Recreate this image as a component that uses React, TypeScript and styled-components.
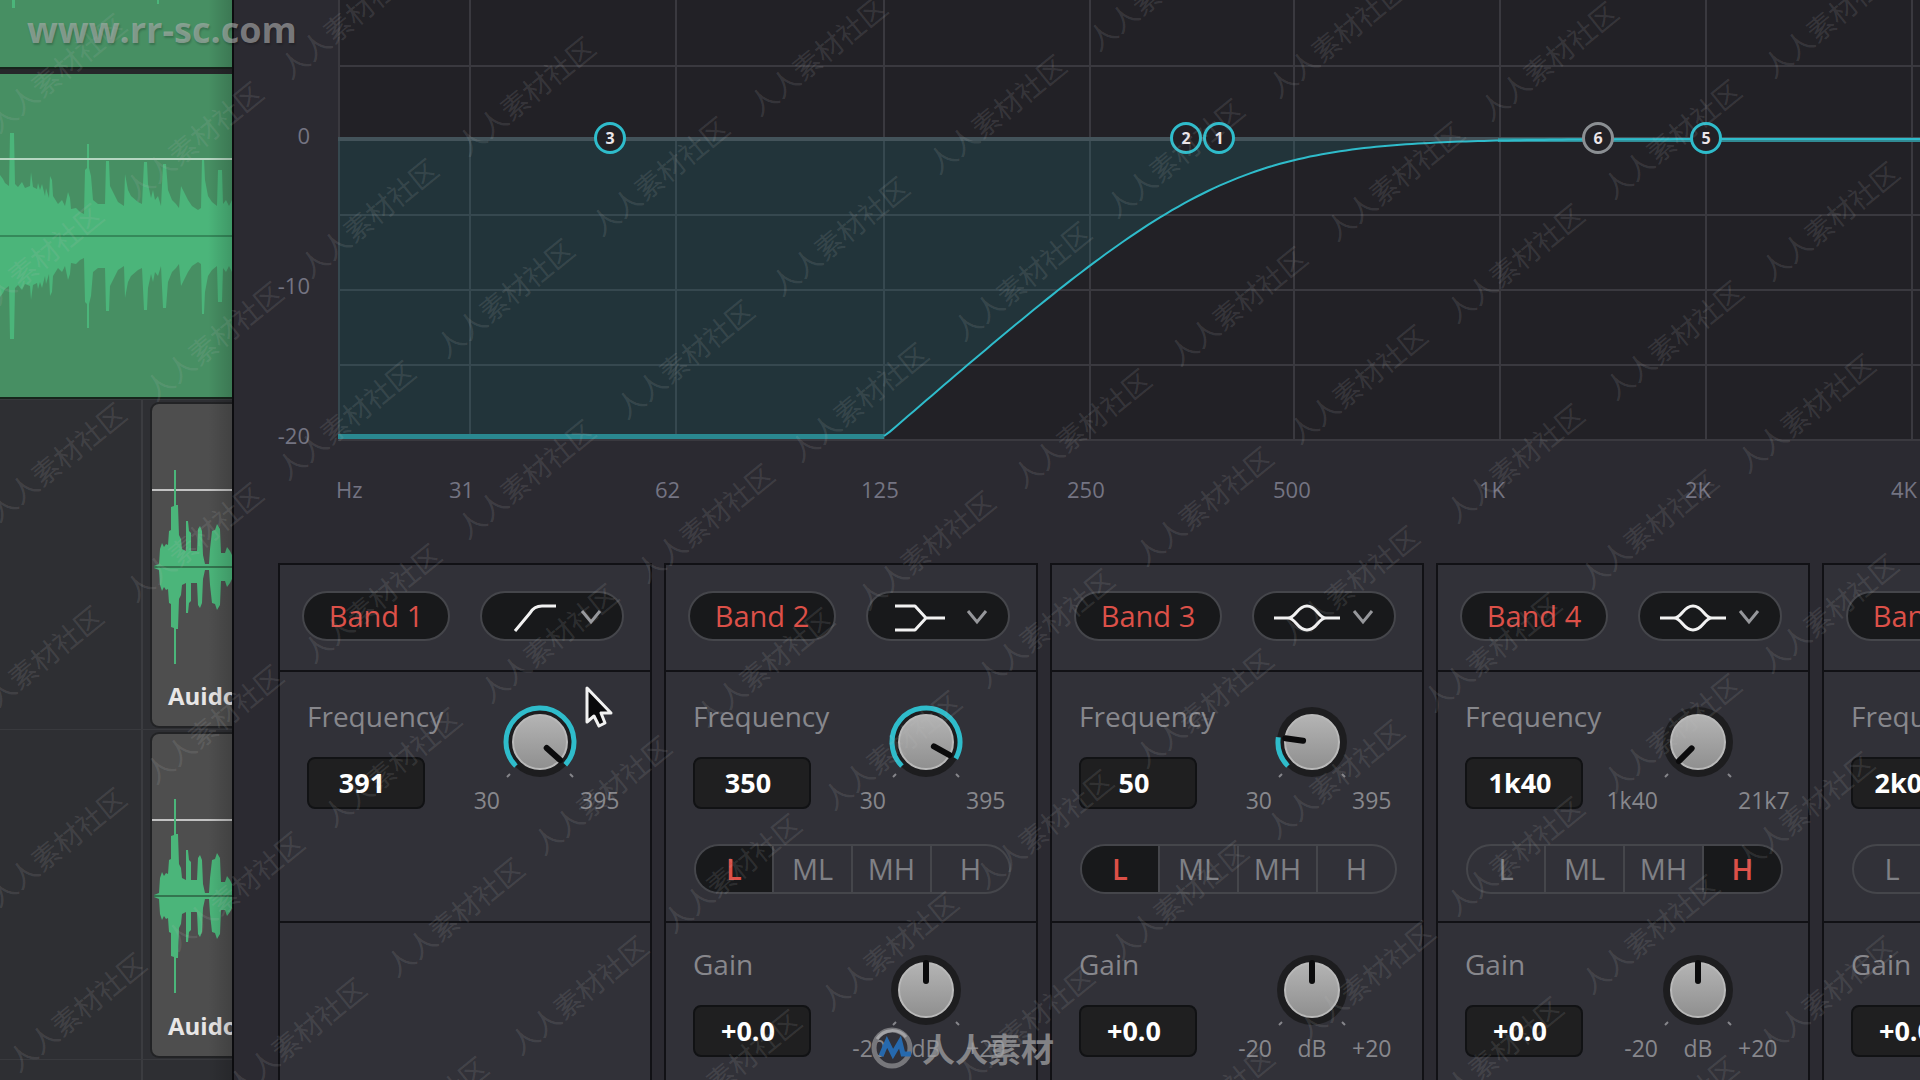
import React, { useState } from "react";
import styled, { createGlobalStyle } from "styled-components";

const Global = createGlobalStyle`
  *, *::before, *::after { box-sizing: border-box; }
  html, body { margin: 0; background: #2b2a31; }
  body { font-family: "Open Sans", "Noto Sans", sans-serif; overflow: hidden; }
  button, input, select { font: inherit; color: inherit; margin: 0; }
`;

const TEAL = "#2fbccb";
const RED = "#dc5048";

const Page = styled.div`
  position: relative;
  display: flex;
  height: 100vh;
  overflow: hidden;
`;

/* ---------- Timeline ---------- */

const Timeline = styled.aside`
  flex: 0 0 232px;
  display: flex;
  flex-direction: column;
  overflow: hidden;
  background: #2e2f33;
`;

const MusicClip = styled.div<{ $height: number }>`
  flex: none;
  height: ${(p) => p.$height}px;
  background: #478f63;
  border-bottom: 2px solid #17251c;
`;

const ClipGap = styled.div`
  flex: none;
  height: 5px;
  background: #26272a;
`;

const Lane = styled.div`
  flex: none;
  display: flex;
  height: 330px;
  padding: 4px 0 3px;
  border-top: 1px solid #393a3e;
`;

const LaneHead = styled.div`
  flex: 0 0 143px;
  margin: -4px 9px -3px 0;
  border-right: 2px solid #3b3c40;
`;

const VoiceClip = styled.div`
  position: relative;
  flex: 1;
  background: #4e4e4e;
  border-radius: 7px 0 0 7px;
  box-shadow: 0 0 0 2px #222325;
  overflow: hidden;
`;

const ClipName = styled.span`
  position: absolute;
  left: 16px;
  bottom: 12px;
  color: #e8e6e6;
  font-size: 24px;
  font-weight: 700;
  line-height: 36px;
`;

const Drawing = styled.svg`
  display: block;
`;

type Point = [number, number];

const MUSIC: Point[] = [
  [0, 61], [3, 57], [5, 53], [9, 50], [10, 103], [14, 103], [15, 52], [18, 49], [22, 54], [25, 48], [30, 50],
  [31, 64], [33, 49], [37, 47], [38, 53], [40, 46], [42, 52], [45, 40], [46, 48], [49, 38], [50, 60], [52, 56], [53, 40], [58, 32],
  [62, 36], [65, 30], [68, 44], [70, 38], [71, 27], [76, 28], [80, 24], [84, 22], [85, 66], [87, 68], [87, 92],
  [89, 92], [89, 68], [91, 60], [93, 36], [98, 32], [105, 32], [106, 75], [109, 75], [110, 50], [114, 42], [118, 34],
  [124, 30], [125, 62], [128, 46], [131, 40], [138, 34], [142, 32], [144, 74], [147, 74], [148, 52], [151, 38], [153, 46],
  [155, 36], [158, 40], [161, 30], [163, 72], [166, 72], [168, 46], [172, 36], [176, 32], [179, 28], [181, 50], [184, 44], [188, 36],
  [192, 30], [198, 26], [201, 28], [202, 78], [204, 78], [205, 56], [208, 40], [212, 34], [217, 30], [218, 66],
  [222, 66], [223, 32], [226, 36], [229, 30], [232, 36],
];

const VOICE: Point[] = [
  [2, 1], [7, 3], [8, 18], [10, 24], [12, 20], [14, 23], [16, 22], [17, 36], [19, 37], [19, 60], [22, 61], [22, 97],
  [24, 97], [24, 62], [26, 62], [27, 32], [29, 28], [30, 18], [34, 16], [34, 46], [36, 46], [37, 36], [39, 34],
  [39, 16], [45, 16], [46, 38], [48, 41], [50, 36], [51, 12], [53, 3], [57, 3], [58, 18], [60, 36], [63, 37],
  [65, 43], [68, 38], [69, 14], [73, 14], [75, 20], [78, 16], [80, 12],
];

const mirror = (points: Point[], mid: number) =>
  [...points.map(([x, h]) => `${x},${mid - h}`), ...[...points].reverse().map(([x, h]) => `${x},${mid + h}`)].join(" ");

function Voice({ name, level, mid }: { name: string; level: number; mid: number }) {
  return (
    <Lane>
      <LaneHead />
      <VoiceClip>
        <Drawing width="80" height="323" aria-hidden="true">
          <rect y={level} width="80" height="2" fill="#c2c2c2" />
          <polygon points={mirror(VOICE, mid)} fill="#4bb57a" />
          <rect x="2" y={mid - 1} width="78" height="2" fill="#33754f" />
        </Drawing>
        <ClipName>{name}</ClipName>
      </VoiceClip>
    </Lane>
  );
}

/* ---------- Equalizer ---------- */

const Equalizer = styled.main`
  position: relative;
  flex: 1;
  min-width: 0;
  overflow: hidden;
  background: #2b2a31;
  border-left: 2px solid #0c0c0f;
`;

const Shade = styled.div`
  position: absolute;
  z-index: 1;
  top: 0;
  left: 208px;
  width: 24px;
  height: 100%;
  background: linear-gradient(90deg, transparent, rgba(0, 0, 0, 0.16));
  pointer-events: none;
`;

const ChartRow = styled.div`
  display: flex;
  align-items: flex-start;
`;

const LevelAxis = styled.div`
  flex: 0 0 104px;
  display: flex;
  flex-direction: column;
  gap: 120px;
  padding: 120px 28px 0 0;
  color: #747482;
  font-size: 22px;
  font-weight: 500;
  line-height: 30px;
  text-align: right;
`;

const Plot = styled.div`
  position: relative;
  flex: 1;
  min-width: 0;
  overflow: hidden;
`;

const Marker = styled.button<{ $x: number; $muted?: boolean }>`
  position: absolute;
  left: ${(p) => p.$x}px;
  top: 138px;
  width: 32px;
  height: 32px;
  padding: 0;
  transform: translate(-50%, -50%);
  border: 3px solid ${(p) => (p.$muted ? "#8b8f93" : TEAL)};
  border-radius: 50%;
  background: #222126;
  color: #ece6ea;
  font-size: 16px;
  font-weight: 700;
  line-height: 26px;
  text-align: center;
`;

const FrequencyAxis = styled.div`
  display: grid;
  grid-template-columns: 113px repeat(8, 206px);
  padding: 24px 0 59px 102px;
  color: #747482;
  font-size: 22px;
  font-weight: 500;
  line-height: 30px;
`;

const CURVE_START = 546;
const curve: string[] = [];
for (let x = CURVE_START; x <= 1700; x += 6) {
  const hz = 125 * Math.pow(2, (x - CURVE_START) / 206);
  const db = 10 * Math.log10(1 + Math.pow(391 / hz, 4));
  curve.push(`${x} ${Math.min(436, 139 + 15 * db).toFixed(1)}`);
}
const curvePath = `M${CURVE_START} 436 L${curve.join(" L")}`;

function Response() {
  return (
    <Drawing width="1700" height="441" role="img" aria-label="Frequency response">
      <rect width="1700" height="440" fill="#222126" />
      <g fill="#3a393f">
        {[0, 131, 337, 545, 751, 955, 1161, 1367, 1573].map((x) => (
          <rect key={x} x={x} width="2" height="440" />
        ))}
        {[65, 214, 289, 364, 439].map((y) => (
          <rect key={y} y={y} width="1700" height="2" />
        ))}
      </g>
      <path d={`M0 436 H${CURVE_START} L${curve.join(" L")} V138 H0 Z`} fill="rgba(34,150,160,0.17)" />
      <rect y="137" width="1700" height="4" fill="#43535a" />
      <rect y="434" width={CURVE_START} height="5" fill="#2a8890" />
      <rect x="1160" y="138" width="540" height="4" fill="#318a93" />
      <path d={curvePath} fill="none" stroke={TEAL} strokeWidth="2" />
    </Drawing>
  );
}

/* ---------- Bands ---------- */

const Bands = styled.div`
  display: grid;
  grid-auto-flow: column;
  grid-auto-columns: 374px;
  gap: 12px;
  padding-left: 44px;
`;

const Card = styled.section`
  background: #313138;
  border: 2px solid #111115;
`;

const CardHead = styled.header`
  display: flex;
  gap: 30px;
  height: 107px;
  padding: 26px 22px 0;
  border-bottom: 2px solid #111115;
`;

const BandToggle = styled.button`
  width: 148px;
  height: 50px;
  padding: 0;
  border: 2px solid #45464b;
  border-radius: 25px;
  background: #18191b;
  color: ${RED};
  font-size: 29px;
  font-weight: 500;
  line-height: 46px;
`;

const ShapePicker = styled.div`
  position: relative;
  width: 144px;
  height: 50px;
  border: 2px solid #45464b;
  border-radius: 25px;
  background: #18191b;
`;

const HiddenSelect = styled.select`
  position: absolute;
  inset: 0;
  width: 100%;
  opacity: 0;
`;

const Control = styled.div<{ $top: number }>`
  display: grid;
  grid-template-columns: 150px 220px;
  align-content: start;
  height: 251px;
  padding-top: ${(p) => p.$top}px;
  border-bottom: 2px solid #111115;
`;

const Field = styled.div`
  display: flex;
  flex-direction: column;
  gap: 21px;
  padding-left: 27px;
`;

const FieldLabel = styled.label`
  color: #87878c;
  font-size: 28px;
  font-weight: 500;
  line-height: 40px;
`;

const Value = styled.input`
  width: 118px;
  height: 52px;
  padding: 0 8px 2px 0;
  border: 2px solid #111214;
  border-radius: 8px;
  background: #1f1f20;
  color: #fff;
  font-size: 27px;
  font-weight: 700;
  text-align: center;
`;

const KnobArea = styled.div`
  position: relative;
  display: flex;
  flex-direction: column;
  align-items: center;
  gap: 3px;
  padding-top: 6px;
`;

const HiddenRange = styled.input`
  position: absolute;
  top: 6px;
  width: 80px;
  height: 80px;
  opacity: 0;
`;

const Scale = styled.div`
  display: grid;
  grid-template-columns: 70px 80px 70px;
  color: #87878c;
  font-size: 23px;
  font-weight: 500;
  line-height: 30px;
  white-space: nowrap;

  span:first-child { justify-self: end; }
  span:nth-child(2) { justify-self: center; }
`;

const Segments = styled.div`
  grid-column: 1 / -1;
  display: grid;
  grid-template-columns: 76px repeat(3, 1fr);
  height: 50px;
  margin: 29px 25px 0 28px;
  border: 2px solid #45464b;
  border-radius: 25px;
  overflow: hidden;
`;

const Segment = styled.button<{ $on: boolean }>`
  padding: 0;
  border: 0;
  border-left: 2px solid #45464b;
  background: ${(p) => (p.$on ? "#18191b" : "transparent")};
  color: ${(p) => (p.$on ? RED : "#7f8085")};
  font-size: 29px;
  font-weight: ${(p) => (p.$on ? 600 : 500)};
  line-height: 46px;

  &:first-child { border-left: 0; }
`;

type Shape = "cut" | "shelf" | "bell";

const SHAPES: Record<Shape, string> = {
  cut: "M33 38 L48 20 Q52 13 60 13 H74",
  shelf: "M27 13 H47 L58 25 L47 37 H27 M58 25 H77",
  bell:
    "M20 25 H34 C42 25 43 13 53 13 C63 13 64 25 72 25 H86 M34 25 C42 25 43 37 53 37 C63 37 64 25 72 25",
};

const polar = (angle: number, r: number) => {
  const a = (angle * Math.PI) / 180;
  return `${(40 + r * Math.sin(a)).toFixed(2)} ${(40 - r * Math.cos(a)).toFixed(2)}`;
};

function Knob({ angle, arc, label }: { angle: number; arc: boolean; label: string }) {
  const big = angle + 135 > 180 ? 1 : 0;
  return (
    <>
      <Drawing width="80" height="80" aria-hidden="true">
        <defs>
          <linearGradient id="knob-face" x1="0" y1="0" x2="0" y2="1">
            <stop offset="0" stopColor="#b4b4b4" />
            <stop offset="1" stopColor="#8f8f8f" />
          </linearGradient>
        </defs>
        <circle cx="40" cy="40" r="35" fill="#1d1d1f" />
        {arc && (
          <path d={`M${polar(-135, 34)} A34 34 0 ${big} 1 ${polar(angle, 34)}`} fill="none" stroke={TEAL} strokeWidth="5" />
        )}
        <circle cx="40" cy="40" r="27" fill="url(#knob-face)" stroke="#b9b9b9" strokeWidth="2" />
        <path d={`M${polar(angle, 9)} L${polar(angle, 27)}`} stroke="#0b0b0c" strokeWidth="6" strokeLinecap="round" />
        <path d="M7 75 L10 72 M73 75 L70 72" stroke="#85858a" strokeWidth="2" />
      </Drawing>
      <HiddenRange type="range" aria-label={label} min={-135} max={135} defaultValue={angle} />
    </>
  );
}

interface Band {
  n: number;
  shape: Shape;
  value: string;
  angle: number;
  range: [string, string];
  part?: string;
}

const BANDS: Band[] = [
  { n: 1, shape: "cut", value: "391", angle: 132, range: ["30", "395"] },
  { n: 2, shape: "shelf", value: "350", angle: 119, range: ["30", "395"], part: "L" },
  { n: 3, shape: "bell", value: "50", angle: -82, range: ["30", "395"], part: "L" },
  { n: 4, shape: "bell", value: "1k40", angle: -135, range: ["1k40", "21k7"], part: "H" },
  { n: 5, shape: "shelf", value: "2k00", angle: -100, range: ["1k40", "21k7"], part: "H" },
];

function BandCard({ band }: { band: Band }) {
  const [part, setPart] = useState(band.part);
  const id = `band-${band.n}`;
  return (
    <Card>
      <CardHead>
        <BandToggle type="button">Band {band.n}</BandToggle>
        <ShapePicker>
          <Drawing width="140" height="46" fill="none" aria-hidden="true">
            <path d={SHAPES[band.shape]} stroke="#f2f2f2" strokeWidth="3" strokeLinejoin="round" />
            <path d="M100 18 L109 29 L118 18" stroke="#96979b" strokeWidth="3" />
          </Drawing>
          <HiddenSelect aria-label={`Band ${band.n} shape`} defaultValue={band.shape}>
            <option value="cut" />
            <option value="shelf" />
            <option value="bell" />
          </HiddenSelect>
        </ShapePicker>
      </CardHead>
      <Control $top={24}>
        <Field>
          <FieldLabel htmlFor={`${id}-freq`}>Frequency</FieldLabel>
          <Value id={`${id}-freq`} defaultValue={band.value} />
        </Field>
        <KnobArea>
          <Knob angle={band.angle} arc={band.angle > -135} label={`Band ${band.n} frequency`} />
          <Scale>
            <span>{band.range[0]}</span>
            <span />
            <span>{band.range[1]}</span>
          </Scale>
        </KnobArea>
        {part && (
          <Segments>
            {["L", "ML", "MH", "H"].map((s) => (
              <Segment key={s} type="button" $on={s === part} onClick={() => setPart(s)}>
                {s}
              </Segment>
            ))}
          </Segments>
        )}
      </Control>
      {part && (
        <Control $top={21}>
          <Field>
            <FieldLabel htmlFor={`${id}-gain`}>Gain</FieldLabel>
            <Value id={`${id}-gain`} defaultValue="+0.0" />
          </Field>
          <KnobArea>
            <Knob angle={0} arc={false} label={`Band ${band.n} gain`} />
            <Scale>
              <span>-20</span>
              <span>dB</span>
              <span>+20</span>
            </Scale>
          </KnobArea>
        </Control>
      )}
    </Card>
  );
}

/* ---------- Overlays ---------- */

const Overlay = styled.div`
  position: absolute;
  inset: 0;
  z-index: 2;
  overflow: hidden;
  pointer-events: none;
`;

const Stamp = styled.span<{ $x: number; $y: number }>`
  position: absolute;
  left: ${(p) => p.$x}px;
  top: ${(p) => p.$y}px;
  transform: translate(-50%, -50%) rotate(-39deg);
  color: rgba(190, 190, 190, 0.15);
  font-family: "Noto Sans CJK SC", sans-serif;
  font-size: 28px;
  line-height: 32px;
  white-space: nowrap;
`;

const SiteMark = styled.span`
  position: absolute;
  left: 27px;
  top: 6px;
  color: rgba(178, 178, 178, 0.6);
  font-size: 36px;
  font-weight: 700;
  line-height: 48px;
  text-shadow: 1px 2px 2px rgba(0, 0, 0, 0.2);
`;

const Brand = styled.div`
  position: absolute;
  left: 870px;
  bottom: 10px;
  display: flex;
  align-items: center;
  gap: 8px;
  color: rgba(160, 160, 162, 0.75);
  font-family: "Noto Sans CJK SC", sans-serif;
  font-size: 33px;
  font-weight: 700;
  line-height: 44px;
`;

const Pointer = styled.svg`
  position: absolute;
  left: 583px;
  top: 684px;
`;

/* Centre of the last character of each stamp. */
const STAMPS: Point[] = [
  [115, 27], [252, 95], [427, 172], [92, 217], [272, 295], [404, 374], [115, 416], [252, 496], [92, 619], [272, 678],
  [115, 801], [293, 845], [135, 966], [407, -27], [584, 50], [718, 130], [563, 252], [898, 190], [743, 313],
  [917, 356], [584, 433], [763, 477], [876, 10], [1055, 68], [1233, 112], [1080, 235], [1296, 260], [1140, 382],
  [984, 504], [1262, 460], [1103, 582], [1215, -55], [1395, -8], [1607, 15], [1730, 93], [1888, 175], [1453, 135],
  [1573, 217], [1732, 294], [1416, 338], [1573, 417], [1864, 367], [1707, 483], [1890, -28], [430, 557], [607, 597],
  [450, 721], [513, 871], [355, 991], [637, 949], [660, 749], [477, 1070], [823, 621], [950, 704], [790, 827],
  [947, 905], [790, 1023], [1262, 662], [1393, 733], [1102, 783], [1237, 854], [1424, 934], [1083, 979], [1263, 1060],
  [1408, 539], [1550, 606], [1887, 567], [1730, 687], [1573, 810], [1863, 765], [1708, 888], [1885, 949],
  [1552, 1010], [1727, 1069],
];

export default function App() {
  return (
    <Page>
      <Global />
      <Timeline>
        <MusicClip $height={69}>
          <Drawing width="232" height="10" aria-hidden="true">
            <rect x="12" width="3" height="8" fill="#4bb57a" />
            <rect x="157" width="2" height="4" fill="#4bb57a" />
          </Drawing>
        </MusicClip>
        <ClipGap />
        <MusicClip $height={325}>
          <Drawing width="232" height="323" aria-hidden="true">
            <polygon points={mirror(MUSIC, 162)} fill="#4bb57a" />
            <rect y="84" width="232" height="2" fill="#b5d6c1" />
            <rect y="161" width="232" height="2" fill="#35895a" />
          </Drawing>
        </MusicClip>
        <Voice name="Auido" level={85} mid={163} />
        <Voice name="Auido" level={85} mid={162} />
        <Lane>
          <LaneHead />
        </Lane>
      </Timeline>
      <Shade />

      <Equalizer>
        <ChartRow>
          <LevelAxis>
            <span>0</span>
            <span>-10</span>
            <span>-20</span>
          </LevelAxis>
          <Plot>
            <Response />
            <Marker type="button" $x={272}>3</Marker>
            <Marker type="button" $x={848}>2</Marker>
            <Marker type="button" $x={881}>1</Marker>
            <Marker type="button" $x={1260} $muted>6</Marker>
            <Marker type="button" $x={1368}>5</Marker>
          </Plot>
        </ChartRow>
        <FrequencyAxis>
          {["Hz", "31", "62", "125", "250", "500", "1K", "2K", "4K"].map((t) => (
            <span key={t}>{t}</span>
          ))}
        </FrequencyAxis>
        <Bands>
          {BANDS.map((b) => (
            <BandCard key={b.n} band={b} />
          ))}
        </Bands>
      </Equalizer>

      <Overlay>
        {STAMPS.map(([x, y]) => (
          <Stamp key={`${x}-${y}`} $x={x - 59} $y={y + 45}>
            人人素材社区
          </Stamp>
        ))}
        <SiteMark>www.rr-sc.com</SiteMark>
        <Brand>
          <Drawing width="44" height="44" fill="none" aria-hidden="true">
            <circle cx="22" cy="22" r="18" stroke="#77777b" strokeWidth="5" />
            <path d="M7 13 A18 18 0 0 1 36 11" stroke="#a3a3a6" strokeWidth="3" />
            <path d="M11 30 L17 16 L23 28 L30 16 L33 28 H41" stroke="#2669ad" strokeWidth="5" />
          </Drawing>
          <span>人人素材</span>
        </Brand>
        <Pointer width="34" height="46" aria-hidden="true">
          <path
            d="M4 4 V38 L11 32 L16 42 L22 39 L18 29 H28 Z"
            fill="#08080a"
            stroke="#f1f1f1"
            strokeWidth="3"
            strokeLinejoin="round"
          />
        </Pointer>
      </Overlay>
    </Page>
  );
}
